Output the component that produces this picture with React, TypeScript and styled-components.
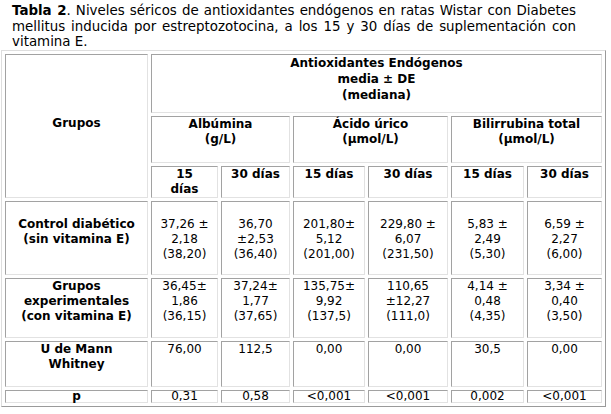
import React from "react";
import styled, { createGlobalStyle } from "styled-components";

const Global = createGlobalStyle`
  html, body { margin: 0; padding: 0; background: #fff; }
  body { font-family: "DejaVu Sans", Verdana, sans-serif; color: #000; }
`;

const Page = styled.div`
  display: flex;
  flex-direction: column;
  align-items: flex-start;
`;

const Caption = styled.div`
  width: 564px;
  margin-left: 12px;
  padding-top: 3px;
  font-size: 13.4px;
  line-height: 15.7px;
`;

const CaptionLine = styled.span<{ $last?: boolean }>`
  display: block;
  text-align: justify;
  text-align-last: ${(p) => (p.$last ? "left" : "justify")};
  white-space: nowrap;
`;

const Table = styled.table`
  box-sizing: border-box;
  width: 605px;
  margin-left: 1px;
  table-layout: fixed;
  border-collapse: separate;
  border-spacing: 3px;
  border-style: solid;
  border-width: 1px;
  border-color: #dedede #9a9a9a #9a9a9a #dedede;
  font-size: 12px;
  line-height: 15px;
`;

const Row = styled.tr<{ $h: number; $pt?: number; $lh?: number }>`
  height: ${(p) => p.$h}px;
  & > td {
    padding-top: ${(p) => p.$pt ?? 0}px;
    ${(p) => (p.$lh ? `line-height: ${p.$lh}px;` : "")}
  }
`;

const Cell = styled.td<{ $bold?: boolean; $middle?: boolean; $pb?: number }>`
  box-sizing: border-box;
  border-style: solid;
  border-width: 1px;
  border-color: #a2a2a2 #e2e2e2 #e2e2e2 #a2a2a2;
  padding: 0 1px ${(p) => p.$pb ?? 0}px 1px;
  text-align: center;
  vertical-align: ${(p) => (p.$middle ? "middle" : "top")};
  font-weight: ${(p) => (p.$bold ? 700 : 400)};
  white-space: nowrap;
  overflow: visible;
`;

const Lines = ({ lines }: { lines: string[] }) => (
  <>
    {lines.map((l, i) => (
      <React.Fragment key={i}>
        {i > 0 && <br />}
        {l}
      </React.Fragment>
    ))}
  </>
);

const widths = [143, 67, 69, 72, 80, 73, 75];

type BodyRow = {
  label: string[];
  values: string[][];
  h: number;
  pt: number;
  lh?: number;
};

const body: BodyRow[] = [
  {
    label: ["Control diabético", "(sin vitamina E)"],
    values: [
      ["37,26 ±", "2,18", "(38,20)"],
      ["36,70", "±2,53", "(36,40)"],
      ["201,80±", "5,12", "(201,00)"],
      ["229,80 ±", "6,07", "(231,50)"],
      ["5,83 ±", "2,49", "(5,30)"],
      ["6,59 ±", "2,27", "(6,00)"],
    ],
    h: 74,
    pt: 15,
  },
  {
    label: ["Grupos", "experimentales", "(con vitamina E)"],
    values: [
      ["36,45±", "1,86", "(36,15)"],
      ["37,24±", "1,77", "(37,65)"],
      ["135,75±", "9,92", "(137,5)"],
      ["110,65", "±12,27", "(111,0)"],
      ["4,14 ±", "0,48", "(4,35)"],
      ["3,34 ±", "0,40", "(3,50)"],
    ],
    h: 60,
    pt: 0,
  },
  {
    label: ["U de Mann", "Whitney"],
    values: [["76,00"], ["112,5"], ["0,00"], ["0,00"], ["30,5"], ["0,00"]],
    h: 46,
    pt: 0,
  },
  {
    label: ["p"],
    values: [["0,31"], ["0,58"], ["<0,001"], ["<0,001"], ["0,002"], ["<0,001"]],
    h: 13,
    pt: 0,
    lh: 11,
  },
];

export default function App() {
  return (
    <Page>
      <Global />
      <Caption>
        <CaptionLine>
          <b>Tabla 2</b>. Niveles séricos de antioxidantes endógenos en ratas Wistar con Diabetes
        </CaptionLine>
        <CaptionLine>
          mellitus inducida por estreptozotocina, a los 15 y 30 días de suplementación con
        </CaptionLine>
        <CaptionLine $last>vitamina E.</CaptionLine>
      </Caption>
      <Table>
        <colgroup>
          {widths.map((w, i) => (
            <col key={i} style={{ width: w }} />
          ))}
        </colgroup>
        <tbody>
          <Row $h={59} $lh={16}>
            <Cell rowSpan={3} $bold $middle $pb={7}>
              Grupos
            </Cell>
            <Cell colSpan={6} $bold>
              <Lines lines={["Antioxidantes Endógenos", "media ± DE", "(mediana)"]} />
            </Cell>
          </Row>
          <Row $h={47}>
            <Cell colSpan={2} $bold>
              <Lines lines={["Albúmina", "(g/L)"]} />
            </Cell>
            <Cell colSpan={2} $bold>
              <Lines lines={["Ácido úrico", "(µmol/L)"]} />
            </Cell>
            <Cell colSpan={2} $bold>
              <Lines lines={["Bilirrubina total", "(µmol/L)"]} />
            </Cell>
          </Row>
          <Row $h={31}>
            <Cell $bold>
              <Lines lines={["15", "días"]} />
            </Cell>
            <Cell $bold>30 días</Cell>
            <Cell $bold>15 días</Cell>
            <Cell $bold>30 días</Cell>
            <Cell $bold>15 días</Cell>
            <Cell $bold>30 días</Cell>
          </Row>
          {body.map((r, i) => (
            <Row key={i} $h={r.h} $pt={r.pt} $lh={r.lh}>
              <Cell $bold>
                <Lines lines={r.label} />
              </Cell>
              {r.values.map((v, j) => (
                <Cell key={j}>
                  <Lines lines={v} />
                </Cell>
              ))}
            </Row>
          ))}
        </tbody>
      </Table>
    </Page>
  );
}
